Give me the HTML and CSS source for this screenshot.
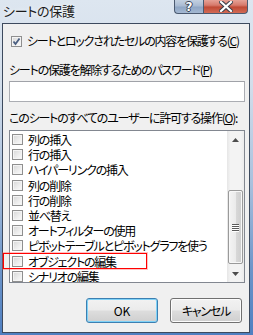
FILE: index.html
```html
<!DOCTYPE html>
<html lang="ja">
<head>
<meta charset="utf-8">
<title>シートの保護</title>
<link rel="stylesheet" href="styles.css">
</head>
<body>
<div class="window">
  <div class="titlebar">
    <span class="title">シートの保護</span>
    <div class="caption-btns">
      <div class="cbtn help">?</div>
      <div class="cbtn close">
        <svg width="14" height="11" viewBox="0 0 14 11"><path d="M2 1 L12 10 M12 1 L2 10" stroke="#3a3f4a" stroke-width="4.2" stroke-linecap="square"/><path d="M2 1 L12 10 M12 1 L2 10" stroke="#ffffff" stroke-width="2.2" stroke-linecap="square"/></svg>
      </div>
    </div>
  </div>
  <div class="client">
    <div class="chk-row">
      <span class="cb checked"><svg width="9" height="9" viewBox="0 0 9 9"><path d="M1.5 4.5 L3.5 7 L7.5 1.5" fill="none" stroke="#4a5e80" stroke-width="1.8"/></svg></span>
      <span class="txt">シートとロックされたセルの内容を保護する(<u>C</u>)</span>
    </div>
    <div class="label pw-label">シートの保護を解除するためのパスワード(<u>P</u>)</div>
    <div class="input"></div>
    <div class="label ops-label">このシートのすべてのユーザーに許可する操作(<u>O</u>):</div>
    <div class="list">
      <ul class="items">
        <li><span class="cb"></span>列の挿入</li>
        <li><span class="cb"></span>行の挿入</li>
        <li><span class="cb"></span>ハイパーリンクの挿入</li>
        <li><span class="cb"></span>列の削除</li>
        <li><span class="cb"></span>行の削除</li>
        <li><span class="cb"></span>並べ替え</li>
        <li><span class="cb"></span>オートフィルターの使用</li>
        <li><span class="cb"></span>ピボットテーブルとピボットグラフを使う</li>
        <li><span class="cb"></span>オブジェクトの編集</li>
        <li><span class="cb"></span>シナリオの編集</li>
      </ul>
      <div class="scrollbar">
        <div class="arrow"><svg width="7" height="4" viewBox="0 0 7 4"><path d="M0 4 L3.5 0 L7 4 Z" fill="#4d4d4d"/></svg></div>
        <div class="track">
          <div class="thumb">
            <span class="grip"></span><span class="grip"></span><span class="grip"></span><span class="grip"></span>
          </div>
        </div>
        <div class="arrow"><svg width="7" height="4" viewBox="0 0 7 4"><path d="M0 0 L7 0 L3.5 4 Z" fill="#4d4d4d"/></svg></div>
      </div>
    </div>
    <div class="buttons">
      <div class="btn ok">OK</div>
      <div class="btn">キャンセル</div>
    </div>
  </div>
  <div class="highlight"></div>
</div>
</body>
</html>
```
FILE: styles.css
```css
html, body {
  margin: 0;
  padding: 0;
  background: #ffffff;
}

body {
  font-family: "Noto Sans CJK JP", "Noto Sans", sans-serif;
  font-feature-settings: "palt";
  font-size: 12px;
  letter-spacing: -1.2px;
  color: #000000;
}

.window {
  position: relative;
  width: 253px;
  height: 335px;
  display: flex;
  flex-direction: column;
  background: linear-gradient(to bottom, #dde6f0 0, #d3deeb 25%, #a9c0dd 55%, #6d95c9 80%, #4f7fc1 100%);
  overflow: hidden;
}

.titlebar {
  height: 23px;
  display: flex;
  align-items: flex-start;
  justify-content: space-between;
  flex: none;
}

.title {
  padding-left: 3px;
  line-height: 22px;
  font-size: 13px;
  letter-spacing: -0.3px;
  color: #1b1b1b;
  text-shadow: 0 0 4px rgba(255,255,255,0.9);
}

.caption-btns {
  display: flex;
  margin-right: 5px;
}

.cbtn {
  height: 14px;
  box-sizing: border-box;
  border: 1px solid #4b5a70;
  border-top: none;
  display: flex;
  align-items: center;
  justify-content: center;
  letter-spacing: 0;
}

.help {
  width: 29px;
  border-right: none;
  border-radius: 0 0 0 4px;
  background: linear-gradient(to bottom, #c3d0e0 0, #a9bbd2 45%, #8fa6c4 55%, #a4b8d2 100%);
  color: #ffffff;
  font-family: "DejaVu Sans", sans-serif;
  font-weight: bold;
  font-size: 12px;
  line-height: 12px;
  text-shadow: 1px 0 0 #3b4454, -1px 0 0 #3b4454, 0 1px 0 #3b4454, 0 -1px 0 #3b4454;
}

.close {
  width: 45px;
  border-radius: 0 0 4px 0;
  background: linear-gradient(to bottom, #e6a196 0, #d77a6c 40%, #c04a35 55%, #d36b56 100%);
}

.client {
  flex: 1;
  margin: 0 3px 2px 2px;
  border: 1px solid #3d4a5e;
  background: #f0f0f0;
  padding: 0 4px 0 6px;
  display: flex;
  flex-direction: column;
}

.chk-row {
  margin-top: 9px;
  height: 16px;
  display: flex;
  align-items: center;
}

.chk-row .cb {
  margin-left: 2px;
  margin-right: 5px;
}

.cb {
  flex: none;
  width: 11px;
  height: 11px;
  box-sizing: border-box;
  border: 1px solid #8f8f8f;
  background: linear-gradient(135deg, #d6d6d6 0, #eeeeee 60%, #fbfbfb 100%);
  box-shadow: inset 0 0 0 1px #f4f4f4;
  display: flex;
  align-items: center;
  justify-content: center;
}

.txt, .label {
  line-height: 16px;
  white-space: nowrap;
}

.label {
  height: 16px;
}

.pw-label {
  margin-top: 13px;
}

.input {
  margin-top: 3px;
  height: 21px;
  box-sizing: border-box;
  border: 1px solid #abadb3;
  border-top-color: #a0a2a8;
  background: #ffffff;
}

.ops-label {
  margin-top: 8px;
}

.list {
  margin-top: 4px;
  height: 153px;
  box-sizing: border-box;
  border: 1px solid #828790;
  background: #ffffff;
  display: flex;
}

.items {
  flex: 1;
  list-style: none;
  margin: 0;
  padding: 1px 0 0 0;
  overflow: hidden;
}

.items li {
  height: 15.2px;
  display: flex;
  align-items: center;
  white-space: nowrap;
  padding-left: 2px;
  line-height: 15px;
}

.items li .cb {
  margin-right: 5px;
}

.scrollbar {
  width: 17px;
  flex: none;
  display: flex;
  flex-direction: column;
  background: linear-gradient(to right, #e6e6e6 0, #f3f3f3 20%, #f3f3f3 80%, #ececec 100%);
}

.arrow {
  height: 17px;
  display: flex;
  align-items: center;
  justify-content: center;
  flex: none;
}

.track {
  flex: 1;
  display: flex;
  flex-direction: column;
  justify-content: flex-end;
  padding-bottom: 1px;
}

.thumb {
  height: 74px;
  margin: 0 1px;
  box-sizing: border-box;
  border: 1px solid #9a9a9a;
  border-radius: 2px;
  background: linear-gradient(to right, #f4f4f4 0, #ebebeb 50%, #d9d9d9 51%, #cdcdcd 100%);
  box-shadow: inset 0 0 0 1px #f8f8f8;
  display: flex;
  flex-direction: column;
  align-items: center;
  justify-content: center;
  gap: 1px;
}

.grip {
  width: 7px;
  height: 1px;
  background: #5a5a5a;
  box-shadow: 0 1px 0 #ffffff;
}

.buttons {
  margin-top: 15px;
  margin-right: 3px;
  display: flex;
  justify-content: flex-end;
  gap: 12px;
}

.btn {
  width: 72px;
  height: 25px;
  box-sizing: border-box;
  border: 1px solid #707070;
  border-radius: 3px;
  background: linear-gradient(to bottom, #f2f2f2 0, #ebebeb 48%, #dddddd 52%, #cfcfcf 100%);
  box-shadow: inset 0 0 0 1px #fcfcfc;
  display: flex;
  align-items: center;
  justify-content: center;
  line-height: 16px;
}

.btn.ok {
  border-color: #3c7fb1;
  box-shadow: inset 0 0 0 1px #7fd2f7;
  letter-spacing: 0;
}

.highlight {
  position: absolute;
  left: 3px;
  top: 253px;
  width: 144px;
  height: 16px;
  box-sizing: border-box;
  border: 1px solid #ff0000;
  box-shadow: 0 0 0 1px rgba(255, 80, 80, 0.35);
  pointer-events: none;
}
```
